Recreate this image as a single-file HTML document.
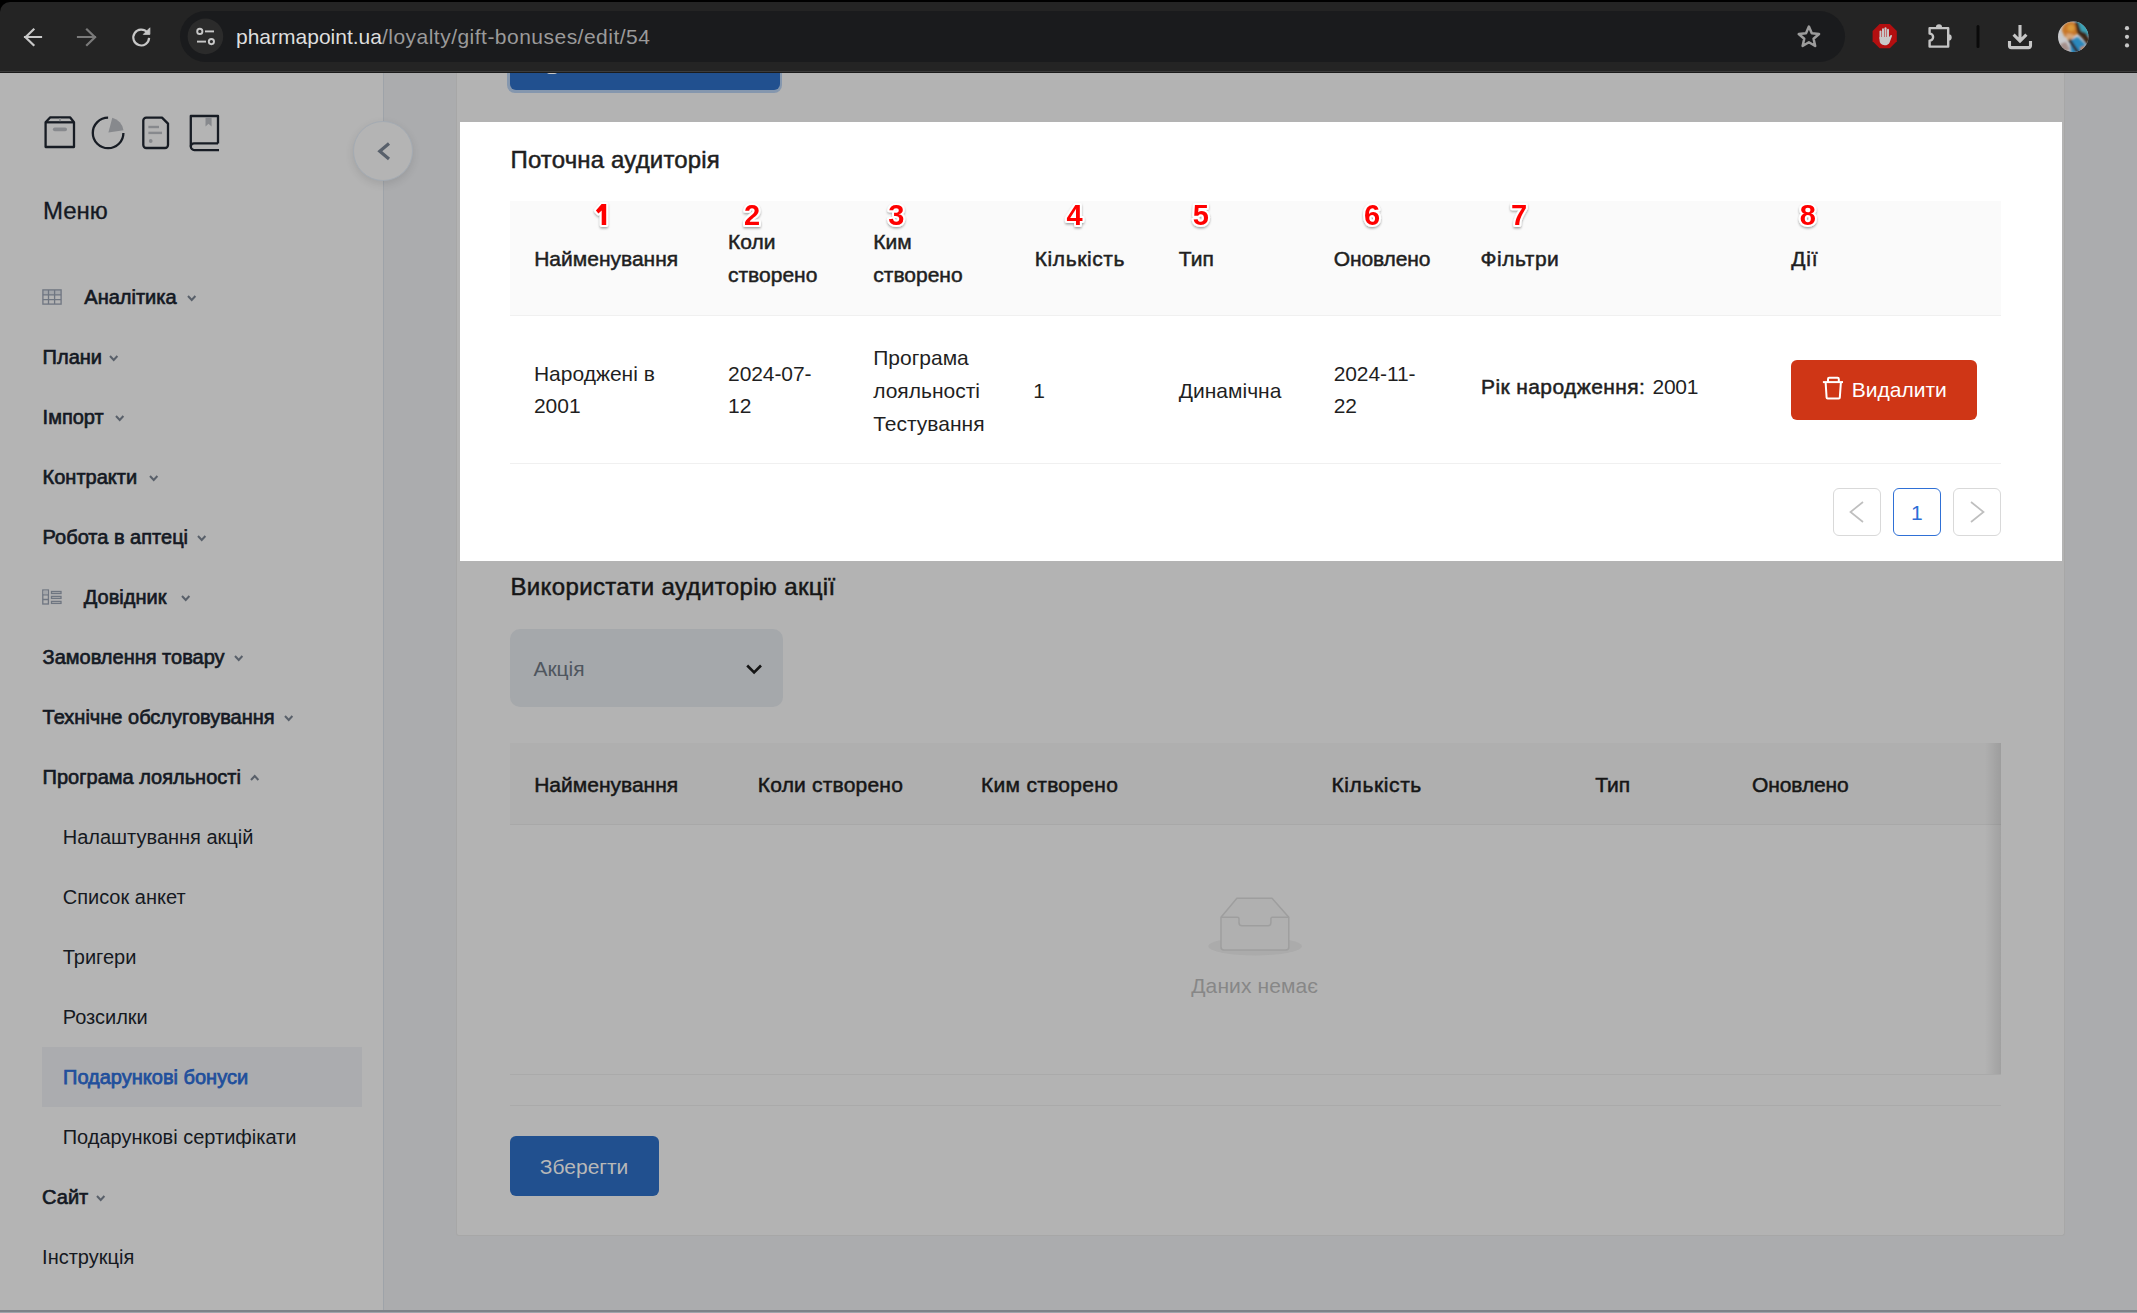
<!DOCTYPE html>
<html><head><meta charset="utf-8">
<style>
*{box-sizing:border-box;margin:0;padding:0}
html,body{width:2137px;height:1313px;overflow:hidden;background:#000;font-family:"Liberation Sans",sans-serif}
.a{position:absolute}
.t{position:absolute;white-space:nowrap}
svg{position:absolute;overflow:visible}
</style></head><body>

<div class="a" style="left:0px;top:2px;width:2137px;height:69px;background:#242424;border-top-left-radius:10px"></div>
<div class="a" style="left:0px;top:71px;width:2137px;height:1px;background:#3b3b3b;"></div>
<div class="a" style="left:0px;top:72px;width:2137px;height:1px;background:#1b1b1b;"></div>
<div class="a" style="left:180px;top:11px;width:1665px;height:51px;background:#1a1b1d;border-radius:26px"></div>
<svg class="a" style="left:0;top:0" width="2137" height="73" viewBox="0 0 2137 73">
 <g fill="none" stroke="#c8c8c8" stroke-width="2.2" stroke-linecap="square">
  <path d="M25 37H41M33.5 29.5L25.5 37.2L33.5 45"/>
 </g>
 <g fill="none" stroke="#7a7a7a" stroke-width="2.2" stroke-linecap="square">
  <path d="M78 37H95M87 29.5L95 37.2L87 45"/>
 </g>
 <g fill="none" stroke="#c8c8c8" stroke-width="2.2">
  <path d="M147.2 32.4A7.9 7.9 0 1 0 149.1 37.9"/>
 </g>
 <path d="M143.3 34.4H149.9V27.8Z" fill="#c8c8c8" stroke="#c8c8c8" stroke-width="0.8" stroke-linejoin="round"/>
 <circle cx="205.4" cy="36.4" r="17.8" fill="#2b2b2b"/>
 <g fill="none" stroke="#c8c8c8" stroke-width="1.9">
  <circle cx="199.8" cy="31.4" r="2.6"/>
  <path d="M205 31.4H214"/>
  <path d="M197 41.6H206"/>
  <circle cx="211.4" cy="41.6" r="2.6"/>
 </g>
 <path d="M1808.90 26.60L1811.78 33.34L1819.08 33.99L1813.56 38.81L1815.19 45.96L1808.90 42.20L1802.61 45.96L1804.24 38.81L1798.72 33.99L1806.02 33.34Z" fill="none" stroke="#9c9c9c" stroke-width="2.5" stroke-linejoin="round"/>
 <path d="M1879.6 24.1H1889.8L1896.8 31.1V41.3L1889.8 48.3H1879.6L1872.6 41.3V31.1Z" fill="#b30f10"/>
 <g fill="#c9c9c9">
  <rect x="1879.5" y="30.6" width="2" height="9" rx="1"/>
  <rect x="1882" y="28.2" width="2" height="11" rx="1"/>
  <rect x="1884.5" y="27.3" width="2" height="12" rx="1"/>
  <rect x="1887" y="28.8" width="2" height="11" rx="1"/>
  <path d="M1879.5 37H1889.2L1890.2 35.6C1890.7 34.6 1892.3 34.8 1891.9 36.2L1889.6 42.4C1888.8 44.3 1887.2 45.2 1884.6 45.2C1881.4 45.2 1879.5 43.4 1879.5 40Z"/>
 </g>
 <path d="M1929.6 28.1H1948.2V46.6H1929.6V40.6A3.5 3.5 0 0 0 1929.6 33.6Z" fill="none" stroke="#c4c4c4" stroke-width="2.4" stroke-linejoin="round"/>
 <path d="M1935.9 27.4A3.1 3.1 0 0 1 1942.1 27.4Z" fill="#c4c4c4"/>
 <path d="M1948.6 34.3A3.1 3.1 0 0 1 1948.6 40.5Z" fill="#c4c4c4"/>
 <rect x="1976.5" y="25" width="3" height="23" rx="1.5" fill="#0a0a0a"/>
 <g fill="none" stroke="#c6c6c6" stroke-width="3.1">
  <path d="M2020 25V40M2013.6 34.6L2020 41L2026.4 34.6"/>
  <path d="M2009.5 41V45.8A1.8 1.8 0 0 0 2011.3 47.6H2028.7A1.8 1.8 0 0 0 2030.5 45.8V41"/>
 </g>
 <defs><clipPath id="avc"><circle cx="2073.2" cy="36.8" r="15.2"/></clipPath><filter id="avb"><feGaussianBlur stdDeviation="0.9"/></filter></defs>
 <g clip-path="url(#avc)">
  <rect x="2057" y="21" width="32" height="32" fill="#c9cacd"/>
  <g filter="url(#avb)">
  <path d="M2074 20H2090V36L2080 34Z" fill="#3aa2b6"/>
  <path d="M2062 31C2062 24 2068 21 2073 22C2078 23 2080 28 2079 33L2072 37L2065 37Z" fill="#c8782a"/>
  <circle cx="2071" cy="28" r="3.5" fill="#d99a3a"/>
  <path d="M2066 34C2068 33 2073 33 2074 36L2072 41L2067 40Z" fill="#d7a577"/>
  <path d="M2070 40L2078 37L2085 44L2084 54H2071Z" fill="#2b88bd"/>
  <path d="M2075 22L2078 22L2081 31L2086 33L2090 40L2088 46L2082 38L2077 33Z" fill="#3a2518"/>
  <path d="M2068 40L2070.5 39L2080 53L2077 54Z" fill="#2d211b"/>
  <path d="M2060 44L2066 42L2070 50L2062 52Z" fill="#a48f8a"/>
  <path d="M2080 48L2084 46L2086 50L2082 52Z" fill="#d08a4a"/>
  </g>
 </g>
 <circle cx="2127" cy="28.2" r="2.1" fill="#c8c8c8"/>
 <circle cx="2127" cy="36.8" r="2.1" fill="#c8c8c8"/>
 <circle cx="2127" cy="45.4" r="2.1" fill="#c8c8c8"/>
</svg>
<div class="t" style="left:236px;top:25px;font-size:21px;line-height:24px;color:#dedede">pharmapoint.ua<span style="color:#9a9a9a;letter-spacing:0.48px">/loyalty/gift-bonuses/edit/54</span></div>

<div class="a" style="left:0px;top:73px;width:2137px;height:1240px;background:#abacae;"></div>
<div class="a" style="left:0px;top:73px;width:383px;height:1240px;background:#b4b4b4;"></div>
<div class="a" style="left:383px;top:73px;width:1px;height:1240px;background:#9ea3a9;"></div>
<svg style="left:0;top:0" width="383" height="180">
 <g fill="none" stroke="#171c24" stroke-width="2.3" stroke-linejoin="round">
  <path d="M50.3 117.3H70L74 122.3V147H45.6V122.3Z"/>
  <path d="M45.6 122.3H74"/>
 </g>
 <rect x="52.9" y="127.5" width="14.1" height="3.7" rx="1.85" fill="#87898d"/>
 <rect x="59.2" y="118.2" width="1.6" height="3" fill="#87898d"/>
 <path d="M108.1 117.6A15.3 15.3 0 1 0 123.4 132.9" fill="none" stroke="#171c24" stroke-width="2.3"/>
 <path d="M108.4 132.6L112.3 117.8A15 15 0 0 1 123.5 130.2Z" fill="#87898d"/>
 <path d="M162 117.6H146.3A3 3 0 0 0 143.3 120.6V145A3 3 0 0 0 146.3 148H165A3 3 0 0 0 168 145V123.6Z" fill="none" stroke="#171c24" stroke-width="2.3" stroke-linejoin="round"/>
 <rect x="148.4" y="125.8" width="10.6" height="2.4" fill="#87898d"/>
 <rect x="148.4" y="131.7" width="13.6" height="2.4" fill="#87898d"/>
 <circle cx="150.7" cy="141" r="1.9" fill="#87898d"/>
 <path d="M218 143.4V116H190.8V146.5A3.6 3.6 0 0 0 194.4 150.1H219" fill="none" stroke="#171c24" stroke-width="2.3" stroke-linejoin="round"/>
 <path d="M190.8 146.6A3.2 3.2 0 0 1 194 143.4H218" fill="none" stroke="#171c24" stroke-width="2.3"/>
 <path d="M205.5 117V126.5L208.5 123.8L211.6 126.5V117Z" fill="#87898d"/>
</svg>
<div class="t" style="left:43.0px;top:198.68px;font-size:24px;line-height:24px;color:#141923;font-weight:400;-webkit-text-stroke:0.3px #141923">Меню</div>
<div class="a" style="left:42px;top:1047px;width:320px;height:60px;background:#abacaf;"></div>
<div class="t" style="left:84.3px;top:287.07px;font-size:20px;line-height:20px;color:#141923;font-weight:400;-webkit-text-stroke:0.65px #141923">Аналітика</div>
<svg style="left:186.8px;top:295px" width="10" height="7"><path d="M1 1L4.7 5L8.4 1" fill="none" stroke="#59606a" stroke-width="2"/></svg>
<div class="t" style="left:42.6px;top:347.07px;font-size:20px;line-height:20px;color:#141923;font-weight:400;-webkit-text-stroke:0.65px #141923">Плани</div>
<svg style="left:109px;top:355px" width="10" height="7"><path d="M1 1L4.7 5L8.4 1" fill="none" stroke="#59606a" stroke-width="2"/></svg>
<div class="t" style="left:42.6px;top:407.07px;font-size:20px;line-height:20px;color:#141923;font-weight:400;-webkit-text-stroke:0.65px #141923">Імпорт</div>
<svg style="left:114.5px;top:415px" width="10" height="7"><path d="M1 1L4.7 5L8.4 1" fill="none" stroke="#59606a" stroke-width="2"/></svg>
<div class="t" style="left:42.6px;top:467.07px;font-size:20px;line-height:20px;color:#141923;font-weight:400;-webkit-text-stroke:0.65px #141923">Контракти</div>
<svg style="left:149.2px;top:475px" width="10" height="7"><path d="M1 1L4.7 5L8.4 1" fill="none" stroke="#59606a" stroke-width="2"/></svg>
<div class="t" style="left:42.6px;top:527.07px;font-size:20px;line-height:20px;color:#141923;font-weight:400;-webkit-text-stroke:0.65px #141923">Робота в аптеці</div>
<svg style="left:196.5px;top:535px" width="10" height="7"><path d="M1 1L4.7 5L8.4 1" fill="none" stroke="#59606a" stroke-width="2"/></svg>
<div class="t" style="left:83.8px;top:587.07px;font-size:20px;line-height:20px;color:#141923;font-weight:400;-webkit-text-stroke:0.65px #141923">Довідник</div>
<svg style="left:181px;top:595px" width="10" height="7"><path d="M1 1L4.7 5L8.4 1" fill="none" stroke="#59606a" stroke-width="2"/></svg>
<div class="t" style="left:42.6px;top:647.07px;font-size:20px;line-height:20px;color:#141923;font-weight:400;-webkit-text-stroke:0.65px #141923">Замовлення товару</div>
<svg style="left:233.7px;top:655px" width="10" height="7"><path d="M1 1L4.7 5L8.4 1" fill="none" stroke="#59606a" stroke-width="2"/></svg>
<div class="t" style="left:42.6px;top:707.07px;font-size:20px;line-height:20px;color:#141923;font-weight:400;-webkit-text-stroke:0.65px #141923">Технічне обслуговування</div>
<svg style="left:283.5px;top:715px" width="10" height="7"><path d="M1 1L4.7 5L8.4 1" fill="none" stroke="#59606a" stroke-width="2"/></svg>
<div class="t" style="left:42.6px;top:767.07px;font-size:20px;line-height:20px;color:#141923;font-weight:400;-webkit-text-stroke:0.65px #141923">Програма лояльності</div>
<svg style="left:249.8px;top:774px" width="10" height="7"><path d="M1 6L4.7 2L8.4 6" fill="none" stroke="#59606a" stroke-width="2"/></svg>
<div class="t" style="left:62.7px;top:827.07px;font-size:20px;line-height:20px;color:#15191f;font-weight:400">Налаштування акцій</div>
<div class="t" style="left:62.7px;top:887.07px;font-size:20px;line-height:20px;color:#15191f;font-weight:400">Список анкет</div>
<div class="t" style="left:62.7px;top:947.07px;font-size:20px;line-height:20px;color:#15191f;font-weight:400">Тригери</div>
<div class="t" style="left:62.7px;top:1007.07px;font-size:20px;line-height:20px;color:#15191f;font-weight:400">Розсилки</div>
<div class="t" style="left:63.0px;top:1067.07px;font-size:20px;line-height:20px;color:#214f9c;font-weight:400;-webkit-text-stroke:0.75px #214f9c">Подарункові бонуси</div>
<div class="t" style="left:62.7px;top:1127.07px;font-size:20px;line-height:20px;color:#15191f;font-weight:400">Подарункові сертифікати</div>
<div class="t" style="left:42.1px;top:1187.07px;font-size:20px;line-height:20px;color:#141923;font-weight:400;-webkit-text-stroke:0.65px #141923">Сайт</div>
<svg style="left:96px;top:1195px" width="10" height="7"><path d="M1 1L4.7 5L8.4 1" fill="none" stroke="#59606a" stroke-width="2"/></svg>
<div class="t" style="left:42.1px;top:1247.07px;font-size:20px;line-height:20px;color:#15191f;font-weight:400">Інструкція</div>
<svg style="left:0;top:0" width="80" height="620">
 <rect x="42.9" y="289.9" width="18.2" height="5" fill="#a3a6aa"/>
 <g fill="none" stroke="#6f7681" stroke-width="1.3">
  <rect x="42.9" y="289.9" width="18.2" height="14.2"/>
  <path d="M48.5 289.9V304.1M54.6 289.9V304.1M42.9 294.8H61.1M42.9 299.6H61.1"/>
  <rect x="42.8" y="590" width="5.6" height="14"/>
  <path d="M42.8 594.8H48.4M42.8 599.5H48.4"/>
  <rect x="51.5" y="591.5" width="9.5" height="2" />
  <rect x="51.5" y="596.4" width="9.5" height="2" />
  <rect x="51.5" y="601.4" width="9.5" height="2" />
 </g>
 <rect x="43.5" y="590.6" width="4.3" height="3.6" fill="#a3a6aa"/>
</svg>
<div class="a" style="left:353.3px;top:121px;width:59.5px;height:59.5px;border-radius:50%;background:#b4b4b4;border:1px solid #a4abb3;box-shadow:0 3px 8px rgba(0,0,0,.10)"></div>
<svg style="left:370px;top:135px" width="30" height="32"><path d="M19 8.5L9.8 16.2L19 23.9" fill="none" stroke="#58606b" stroke-width="3.2" stroke-linecap="butt" stroke-linejoin="miter"/></svg>
<div class="a" style="left:456px;top:73px;width:1609px;height:1163px;background:#b3b3b3;border:1px solid #a7a7a7;border-top:none;border-radius:0 0 3px 3px"></div>
<div class="a" style="left:457px;top:73px;width:400px;height:40px;overflow:hidden"><div class="a" style="left:50px;top:-13px;width:275px;height:32.5px;border-radius:8px;background:#8597ae"></div><div class="a" style="left:52.5px;top:-13px;width:270px;height:29.8px;border-radius:6px;background:#21508f"></div><div class="a" style="left:89px;top:-3px;width:12px;height:4px;border-radius:0 0 6px 6px;background:#c9c9c9"></div></div>
<div class="a" style="left:460px;top:122px;width:1602px;height:439px;background:#fff;"></div>
<div class="t" style="left:510.5px;top:148.18px;font-size:24px;line-height:24px;color:#1f1f1f;font-weight:400;letter-spacing:0.15px;-webkit-text-stroke:0.5px #1f1f1f">Поточна аудиторія</div>
<div class="a" style="left:510px;top:201px;width:1491px;height:114px;background:#fafafa;"></div>
<div class="a" style="left:510px;top:315px;width:1491px;height:1px;background:#f0f0f0;"></div>
<div class="t" style="left:534.2px;top:248.22px;font-size:21px;line-height:21px;color:#1f1f1f;font-weight:400;-webkit-text-stroke:0.5px #1f1f1f">Найменування</div>
<div class="t" style="left:728.0px;top:230.92px;font-size:21px;line-height:21px;color:#1f1f1f;font-weight:400;-webkit-text-stroke:0.5px #1f1f1f">Коли</div>
<div class="t" style="left:728.0px;top:263.72px;font-size:21px;line-height:21px;color:#1f1f1f;font-weight:400;-webkit-text-stroke:0.5px #1f1f1f">створено</div>
<div class="t" style="left:873.3px;top:230.92px;font-size:21px;line-height:21px;color:#1f1f1f;font-weight:400;-webkit-text-stroke:0.5px #1f1f1f">Ким</div>
<div class="t" style="left:873.3px;top:263.72px;font-size:21px;line-height:21px;color:#1f1f1f;font-weight:400;-webkit-text-stroke:0.5px #1f1f1f">створено</div>
<div class="t" style="left:1034.7px;top:248.22px;font-size:21px;line-height:21px;color:#1f1f1f;font-weight:400;letter-spacing:0.6px;-webkit-text-stroke:0.5px #1f1f1f">Кількість</div>
<div class="t" style="left:1178.8px;top:248.22px;font-size:21px;line-height:21px;color:#1f1f1f;font-weight:400;-webkit-text-stroke:0.5px #1f1f1f">Тип</div>
<div class="t" style="left:1333.7px;top:248.22px;font-size:21px;line-height:21px;color:#1f1f1f;font-weight:400;letter-spacing:-0.1px;-webkit-text-stroke:0.5px #1f1f1f">Оновлено</div>
<div class="t" style="left:1480.6px;top:248.22px;font-size:21px;line-height:21px;color:#1f1f1f;font-weight:400;letter-spacing:0.5px;-webkit-text-stroke:0.5px #1f1f1f">Фільтри</div>
<div class="t" style="left:1791.3px;top:248.22px;font-size:21px;line-height:21px;color:#1f1f1f;font-weight:400;letter-spacing:0.8px;-webkit-text-stroke:0.5px #1f1f1f">Дії</div>
<svg style="left:0;top:0" width="2137" height="260"><defs><filter id="ds" x="-50%" y="-50%" width="200%" height="200%"><feDropShadow dx="0" dy="1.5" stdDeviation="1" flood-color="#000" flood-opacity=".35"/></filter></defs><path d="M601.6 204.1H606.2V224.9H601.7V210.6L598.4 213.5L595.9 210.6Z" fill="#ff0000" stroke="#fff" stroke-width="4" stroke-linejoin="round" paint-order="stroke" filter="url(#ds)"/><text x="752.0" y="225.3" text-anchor="middle" font-family="Liberation Sans" font-weight="700" font-size="29" fill="#ff0000" stroke="#fff" stroke-width="4" stroke-linejoin="round" paint-order="stroke" filter="url(#ds)">2</text><text x="896.2" y="225.3" text-anchor="middle" font-family="Liberation Sans" font-weight="700" font-size="29" fill="#ff0000" stroke="#fff" stroke-width="4" stroke-linejoin="round" paint-order="stroke" filter="url(#ds)">3</text><text x="1074.5" y="225.3" text-anchor="middle" font-family="Liberation Sans" font-weight="700" font-size="29" fill="#ff0000" stroke="#fff" stroke-width="4" stroke-linejoin="round" paint-order="stroke" filter="url(#ds)">4</text><text x="1200.8" y="225.3" text-anchor="middle" font-family="Liberation Sans" font-weight="700" font-size="29" fill="#ff0000" stroke="#fff" stroke-width="4" stroke-linejoin="round" paint-order="stroke" filter="url(#ds)">5</text><text x="1372.0" y="225.3" text-anchor="middle" font-family="Liberation Sans" font-weight="700" font-size="29" fill="#ff0000" stroke="#fff" stroke-width="4" stroke-linejoin="round" paint-order="stroke" filter="url(#ds)">6</text><text x="1519.0" y="225.3" text-anchor="middle" font-family="Liberation Sans" font-weight="700" font-size="29" fill="#ff0000" stroke="#fff" stroke-width="4" stroke-linejoin="round" paint-order="stroke" filter="url(#ds)">7</text><text x="1807.7" y="225.3" text-anchor="middle" font-family="Liberation Sans" font-weight="700" font-size="29" fill="#ff0000" stroke="#fff" stroke-width="4" stroke-linejoin="round" paint-order="stroke" filter="url(#ds)">8</text></svg>
<div class="t" style="left:533.9px;top:363.22px;font-size:21px;line-height:21px;color:#1f1f1f;font-weight:400">Народжені в</div>
<div class="t" style="left:533.9px;top:395.22px;font-size:21px;line-height:21px;color:#1f1f1f;font-weight:400">2001</div>
<div class="t" style="left:728.1px;top:363.22px;font-size:21px;line-height:21px;color:#1f1f1f;font-weight:400;letter-spacing:-0.1px">2024-07-</div>
<div class="t" style="left:728.1px;top:395.22px;font-size:21px;line-height:21px;color:#1f1f1f;font-weight:400">12</div>
<div class="t" style="left:873.2px;top:346.82px;font-size:21px;line-height:21px;color:#1f1f1f;font-weight:400">Програма</div>
<div class="t" style="left:873.2px;top:379.72px;font-size:21px;line-height:21px;color:#1f1f1f;font-weight:400">лояльності</div>
<div class="t" style="left:873.2px;top:412.82px;font-size:21px;line-height:21px;color:#1f1f1f;font-weight:400">Тестування</div>
<div class="t" style="left:1033.2px;top:379.52px;font-size:21px;line-height:21px;color:#1f1f1f;font-weight:400">1</div>
<div class="t" style="left:1178.8px;top:379.52px;font-size:21px;line-height:21px;color:#1f1f1f;font-weight:400">Динамічна</div>
<div class="t" style="left:1333.7px;top:363.22px;font-size:21px;line-height:21px;color:#1f1f1f;font-weight:400;letter-spacing:-0.1px">2024-11-</div>
<div class="t" style="left:1333.7px;top:395.22px;font-size:21px;line-height:21px;color:#1f1f1f;font-weight:400">22</div>
<div class="t" style="left:1481.0px;top:376.22px;font-size:21px;line-height:21px;color:#1f1f1f;font-weight:400;letter-spacing:0.4px;-webkit-text-stroke:0.5px #1f1f1f">Рік народження:</div>
<div class="t" style="left:1652.5px;top:376.22px;font-size:21px;line-height:21px;color:#1f1f1f;font-weight:400;letter-spacing:-0.3px">2001</div>
<div class="a" style="left:510px;top:463px;width:1491px;height:1px;background:#f0f0f0;"></div>
<div class="a" style="left:1791px;top:360px;width:186px;height:60px;border-radius:6px;background:#cf3616"></div>
<svg style="left:1820px;top:374px" width="26" height="28"><g fill="none" stroke="#fff" stroke-width="2" stroke-linejoin="round">
<path d="M2.9 8.1H23"/><path d="M8 8.1V5A1.2 1.2 0 0 1 9.2 3.8H17.6A1.2 1.2 0 0 1 18.8 5V8.1"/><path d="M5.6 8.1L6.6 23.6A1 1 0 0 0 7.6 24.6H18.8A1 1 0 0 0 19.8 23.6L20.9 8.1"/></g></svg>
<div class="t" style="left:1851.8px;top:378.82px;font-size:21px;line-height:21px;color:#ffffff;font-weight:400">Видалити</div>
<div class="a" style="left:1833.2px;top:488.2px;width:47.6px;height:47.6px;border:1.5px solid #d9d9d9;border-radius:6px"></div>
<div class="a" style="left:1893.2px;top:488.2px;width:47.6px;height:47.6px;border:1.5px solid #2f70d6;border-radius:6px"></div>
<div class="a" style="left:1953.2px;top:488.2px;width:47.6px;height:47.6px;border:1.5px solid #d9d9d9;border-radius:6px"></div>
<div class="t" style="left:1911.0px;top:501.72px;font-size:21px;line-height:21px;color:#2d6ed6;font-weight:400">1</div>
<svg style="left:1840px;top:495px" width="160" height="36"><g fill="none" stroke="#bfbfbf" stroke-width="1.7"><path d="M23 7L10.5 17L23 27"/><path d="M131 7L143.5 17L131 27"/></g></svg>
<div class="t" style="left:510.5px;top:575.38px;font-size:24px;line-height:24px;color:#161616;font-weight:400;letter-spacing:0.35px;-webkit-text-stroke:0.5px #161616">Використати аудиторію акції</div>
<div class="a" style="left:510px;top:629px;width:273px;height:78px;border-radius:10px;background:#a5a8ab"></div>
<div class="t" style="left:533.4px;top:658.22px;font-size:21px;line-height:21px;color:#4f565e;font-weight:400">Акція</div>
<svg style="left:740px;top:658px" width="28" height="22"><path d="M7.2 7.5L14.1 14.5L21 7.5" fill="none" stroke="#151515" stroke-width="2.6"/></svg>
<div class="a" style="left:510px;top:743px;width:1491px;height:81px;background:#afafaf;"></div>
<div class="a" style="left:510px;top:824px;width:1491px;height:1px;background:#a8a8a8;"></div>
<div class="t" style="left:534.2px;top:773.82px;font-size:21px;line-height:21px;color:#161616;font-weight:400;-webkit-text-stroke:0.5px #161616">Найменування</div>
<div class="t" style="left:757.8px;top:773.82px;font-size:21px;line-height:21px;color:#161616;font-weight:400;letter-spacing:0.2px;-webkit-text-stroke:0.5px #161616">Коли створено</div>
<div class="t" style="left:981.0px;top:773.82px;font-size:21px;line-height:21px;color:#161616;font-weight:400;letter-spacing:0.3px;-webkit-text-stroke:0.5px #161616">Ким створено</div>
<div class="t" style="left:1331.5px;top:773.82px;font-size:21px;line-height:21px;color:#161616;font-weight:400;letter-spacing:0.6px;-webkit-text-stroke:0.5px #161616">Кількість</div>
<div class="t" style="left:1595.2px;top:773.82px;font-size:21px;line-height:21px;color:#161616;font-weight:400;-webkit-text-stroke:0.5px #161616">Тип</div>
<div class="t" style="left:1752.0px;top:773.82px;font-size:21px;line-height:21px;color:#161616;font-weight:400;letter-spacing:-0.1px;-webkit-text-stroke:0.5px #161616">Оновлено</div>
<div class="a" style="left:1985px;top:743px;width:16px;height:332px;background:linear-gradient(90deg,rgba(0,0,0,0),rgba(0,0,0,.10))"></div>
<div class="a" style="left:510px;top:1074px;width:1491px;height:1px;background:#aaaaaa;"></div>
<svg style="left:1210px;top:890px" width="100" height="70">
<ellipse cx="45.1" cy="56.3" rx="46.9" ry="9.1" fill="#ababab"/>
<g fill="#b0b0b0" stroke="#9e9e9e" stroke-width="1.5" stroke-linejoin="round">
<path d="M11 27.3L26.9 8.2H62L78.8 27.3V56.9A3 3 0 0 1 75.8 59.9H14A3 3 0 0 1 11 56.9Z"/>
<path d="M11 27.3H27.5A1.5 1.5 0 0 1 29 28.8V32.7A3 3 0 0 0 32 35.7H57.9A3 3 0 0 0 60.9 32.7V28.8A1.5 1.5 0 0 1 62.4 27.3H78.8" fill="none"/>
</g></svg>
<div class="t" style="left:1191.3px;top:974.92px;font-size:21px;line-height:21px;color:#878787;font-weight:400;letter-spacing:0.1px">Даних немає</div>
<div class="a" style="left:510px;top:1105px;width:1491px;height:1px;background:#aaaaaa;"></div>
<div class="a" style="left:510px;top:1136px;width:149px;height:60px;border-radius:6px;background:#21508f"></div>
<div class="t" style="left:539.8px;top:1156.32px;font-size:21px;line-height:21px;color:#b8b8b8;font-weight:400">Зберегти</div>
<div class="a" style="left:0px;top:1310px;width:2137px;height:2px;background:#7d8288;"></div>
<div class="a" style="left:0px;top:1312px;width:2137px;height:1px;background:#9ea4ab;"></div>
</body></html>
